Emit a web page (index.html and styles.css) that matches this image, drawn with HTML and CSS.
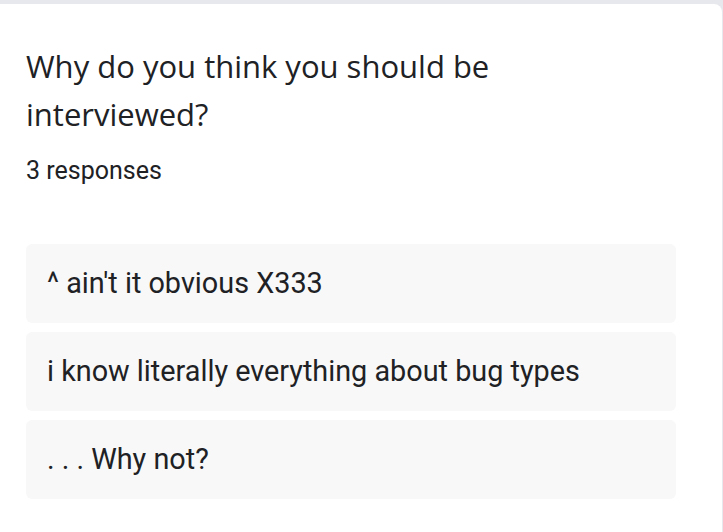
FILE: index.html
```html
<!DOCTYPE html>
<html lang="en">
<head>
<meta charset="utf-8">
<title>Responses</title>
<link rel="stylesheet" href="styles.css">
</head>
<body>
  <main class="card">
    <h1 class="question">Why do you think you should be interviewed?</h1>
    <p class="count">3 responses</p>
    <ul class="answers">
      <li class="answer">^ ain't it obvious X333</li>
      <li class="answer">i know literally everything about bug types</li>
      <li class="answer">. . . Why not?</li>
    </ul>
  </main>
</body>
</html>
```

FILE: styles.css
```css
html, body {
  margin: 0;
  padding: 0;
  background: #e7e7ee;
  overflow: hidden;
}

body {
  width: 723px;
  height: 532px;
}

.card {
  box-sizing: border-box;
  height: 528px;
  margin: 4px 1px 0 -10px;
  padding: 38px 46px 0 36px;
  background: #ffffff;
  border-radius: 8px 8px 0 0;
  color: #202124;
}

.question {
  margin: 0;
  width: 480px;
  font-family: "Open Sans", "Liberation Sans", sans-serif;
  font-weight: 400;
  font-size: 31px;
  line-height: 48px;
  color: #202124;
}

.count {
  margin: 19px 0 0;
  font-family: Roboto, "Liberation Sans", sans-serif;
  font-size: 25px;
  line-height: 28px;
  color: #202124;
}

.answers {
  list-style: none;
  margin: 59px 0 0;
  padding: 0;
  display: flex;
  flex-direction: column;
  gap: 9px;
}

.answer {
  background: #f8f8f8;
  border-radius: 6px;
  padding: 23px 21px 24px;
  font-family: Roboto, "Liberation Sans", sans-serif;
  font-size: 28.8px;
  line-height: 32px;
  color: #202124;
}
```
